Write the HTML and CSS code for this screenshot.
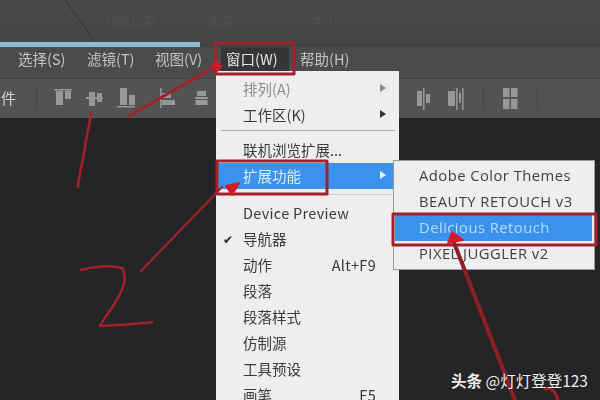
FILE: index.html
```html
<!DOCTYPE html>
<html lang="zh-CN">
<head>
<meta charset="utf-8">
<title>窗口菜单</title>
<link rel="stylesheet" href="styles.css">
</head>
<body>
<div class="app">
  <header class="topstrip">
    <div class="columns">
      <span class="col col-date">修改日期</span>
      <span class="col col-type">类型</span>
      <span class="col col-size">大小</span>
    </div>
    <div class="progress"></div>
  </header>
  <nav class="menubar">
    <span class="mi mi-select">选择(S)</span>
    <span class="mi mi-filter">滤镜(T)</span>
    <span class="mi mi-view">视图(V)</span>
    <span class="mi mi-window">窗口(W)</span>
    <span class="mi mi-help">帮助(H)</span>
  </nav>
  <div class="options">
    <span class="optlabel">件</span>
    <i class="vsep sep-a"></i>
    <svg class="tools" width="520" height="40" viewBox="0 0 520 40" fill="#979797">
      <path d="M2 10h18v1.500H2zM4 12h7v14H4zM13 12h6v8h-6z"/>
      <path d="M34 18h17v2H34zM37 13h6v14h-6zM45 14h5v9h-5z"/>
      <path d="M65 27h18v1.500H65zM68 9h7v17h-7zM77 16h6v10h-6z"/>
      <path d="M108 9h1.500v20H108zM110 14h9v5h-9zM110 21h13v5h-13z"/>
      <path d="M143 18h13v2h-13zM145 12h9v5h-9zM143.500 21h12v5h-12z"/>
      <path d="M365 12h5v15h-5zM371 9h1.500v22H371zM374 15h4v9h-4z"/>
      <path d="M396 12h7v15h-7zM404 9h1.500v22H404zM407 14h2v10h-2zM410 9h1.500v22H410z"/>
      <path d="M451 9h6.500v9H451zM459 9h6.500v9H459zM451 20h6.500v10H451zM459 20h6.500v10H459z"/>
    </svg>
    <i class="vsep sep-b"></i>
    <i class="vsep sep-c"></i>
  </div>
  <main class="canvas"></main>
</div>

<section class="menu">
  <div class="row muted"><span>排列(A)</span><b class="arrow grey"></b></div>
  <div class="row"><span>工作区(K)</span><b class="arrow"></b></div>
  <hr class="rule rule-a">
  <div class="row"><span>联机浏览扩展...</span></div>
  <div class="row active"><span>扩展功能</span><b class="arrow white"></b></div>
  <hr class="rule rule-b">
  <div class="row"><span class="latin">Device Preview</span></div>
  <div class="row"><em class="check">✔</em><span>导航器</span></div>
  <div class="row"><span>动作</span><kbd>Alt+F9</kbd></div>
  <div class="row"><span>段落</span></div>
  <div class="row"><span>段落样式</span></div>
  <div class="row"><span>仿制源</span></div>
  <div class="row"><span>工具预设</span></div>
  <div class="row"><span>画笔</span><kbd>F5</kbd></div>
</section>

<section class="submenu">
  <div class="subrow">Adobe Color Themes</div>
  <div class="subrow">BEAUTY RETOUCH v3</div>
  <div class="subrow selected">Delicious Retouch</div>
  <div class="subrow">PIXEL JUGGLER v2</div>
</section>

<svg class="marks" width="600" height="400" viewBox="0 0 600 400" fill="none" stroke="#a3222a" stroke-linecap="round" stroke-linejoin="round">
  <path d="M215 43H294V74H216z" stroke-width="3"/>
  <path d="M217 161V194H327V161H218z" stroke-width="3"/>
  <path d="M393 214H596V245H393z" stroke-width="3"/>
  <path d="M129 116L216 66" stroke-width="3"/>
  <path d="M217 61l5 5-5 6-5-6z" fill="#d01c28" stroke="#d01c28" stroke-width="1"/>
  <path d="M91 113C90 125 86 135 85 148C83 160 79 175 78 187" stroke-width="2.500"/>
  <path d="M141 271L222 187" stroke-width="2"/>
  <path d="M239 183l-13 3 6 9z" fill="#d01c28" stroke="#d01c28" stroke-width="2"/>
  <path d="M81 270C90 268 104 264 122 268C127 276 124 286 120 294C114 306 104 318 100 326C112 325 135 325 152 322" stroke-width="2.500"/>
  <path d="M453 240L515 400" stroke="#8f1f27" stroke-width="4"/>
  <path d="M452 232l-4 11 15-3z" fill="#d01c28" stroke="#d01c28" stroke-width="2"/>
  <path d="M545 389C552 387 556 393 558 400" stroke-width="3"/>
</svg>

<div class="watermark"><strong class="wm-brand">头条</strong> @灯灯登登123</div>
</body>
</html>
```
FILE: styles.css
```css
* { box-sizing: border-box; }
html, body { margin: 0; height: 100%; }
body {
  position: relative;
  width: 600px;
  height: 400px;
  overflow: hidden;
  background: #252426;
  font-family: "Noto Sans CJK SC", "Noto Sans", sans-serif;
}
.app {
  display: flex;
  flex-direction: column;
  height: 400px;
  filter: blur(.5px);
}
.topstrip {
  position: relative;
  height: 47px;
  flex: none;
  background: linear-gradient(#4a4a4a, #464646 85%, #414141);
  display: flex;
  flex-direction: column;
}
.topstrip::after {
  content: "";
  position: absolute;
  left: 63px;
  top: -2px;
  width: 1px;
  height: 54px;
  background: #383838;
  transform: rotate(-36deg);
  transform-origin: top;
}
.columns {
  height: 42px;
  position: relative;
  font-size: 13px;
  color: #505050;
}
.col { position: absolute; top: 10px; }
.col-date { left: 105px; }
.col-type { left: 208px; }
.col-size { left: 311px; }
.progress {
  width: 200px;
  height: 5px;
  background: #8cbcd6;
}
.menubar {
  position: relative;
  height: 31px;
  flex: none;
  background: #4b4b4c;
  font-size: 14.500px;
  line-height: 24px;
  color: #c3c3c3;
}
.mi { position: absolute; top: 0; white-space: nowrap; }
.mi-select { left: 18px; }
.mi-filter { left: 87px; }
.mi-view { left: 155px; }
.mi-window {
  left: 221px;
  width: 68px;
  height: 25px;
  padding-left: 5px;
  color: #e6e6e6;
  background: #363636;
}
.mi-help { left: 300px; }
.options {
  position: relative;
  height: 40px;
  flex: none;
  background: #535354;
  border-top: 1px solid #444;
  font-size: 15px;
  line-height: 38px;
  color: #d2d2d2;
}
.optlabel { position: absolute; left: 1px; top: 0; }
.tools { position: absolute; left: 52px; top: 0; }
.vsep { position: absolute; top: 8px; width: 1px; height: 24px; background: #464646; }
.sep-a { left: 36px; }
.sep-b { left: 483px; }
.sep-c { left: 537px; }
.canvas { flex: 1; background: #252426; }

.menu {
  position: absolute;
  left: 216px;
  top: 71px;
  width: 183px;
  height: 329px;
  overflow: hidden;
  padding-top: 5px;
  background: #eeeef0;
  color: #3a3a3a;
  font-size: 14.500px;
  filter: blur(.4px);
}
.row {
  position: relative;
  height: 26px;
  line-height: 26px;
  padding-left: 27px;
  white-space: nowrap;
}
.latin { letter-spacing: .3px; }
.muted { color: #8d8d8d; }
.active { background: #3b92ec; color: #dcecfb; }
.rule {
  height: 1px;
  border: 0;
  background: #a9a9a9;
}
.rule-a { margin: 2px 4px 6px 5px; }
.rule-b { margin: 5px 4px 5px 5px; background: #cfcfcf; }
.arrow {
  position: absolute;
  right: 13px;
  top: 8px;
  border-left: 6px solid #333;
  border-top: 4.500px solid transparent;
  border-bottom: 4.500px solid transparent;
}
.arrow.grey { border-left-color: #8a8a8a; }
.arrow.white { border-left-color: #e8f2fc; }
.check { position: absolute; left: 7px; font-style: normal; font-size: 12px; color: #222; }
kbd {
  position: absolute;
  right: 23px;
  top: 0;
  font: inherit;
  letter-spacing: .3px;
}
.submenu {
  position: absolute;
  left: 393px;
  top: 160px;
  width: 202px;
  height: 110px;
  padding-top: 2px;
  background: #eeeef0;
  border: 1px solid #9b9b9b;
  color: #3f3f3f;
  font-family: "Open Sans", "Noto Sans", sans-serif;
  font-size: 14.800px;
  letter-spacing: .45px;
  filter: blur(.4px);
}
.subrow {
  height: 26px;
  line-height: 25px;
  padding-left: 25px;
  white-space: nowrap;
}
.selected { background: #3b92ec; color: #b5dcf7; margin: 0 2px 0 1px; padding-left: 24px; }
.marks { position: absolute; left: 0; top: 0; filter: blur(.3px); }
.watermark {
  position: absolute;
  left: 451px;
  top: 369px;
  font-size: 15.500px;
  color: #ededed;
  white-space: nowrap;
  text-shadow: 0 0 2px #222;
}
.wm-brand { font-weight: 700; }
```
